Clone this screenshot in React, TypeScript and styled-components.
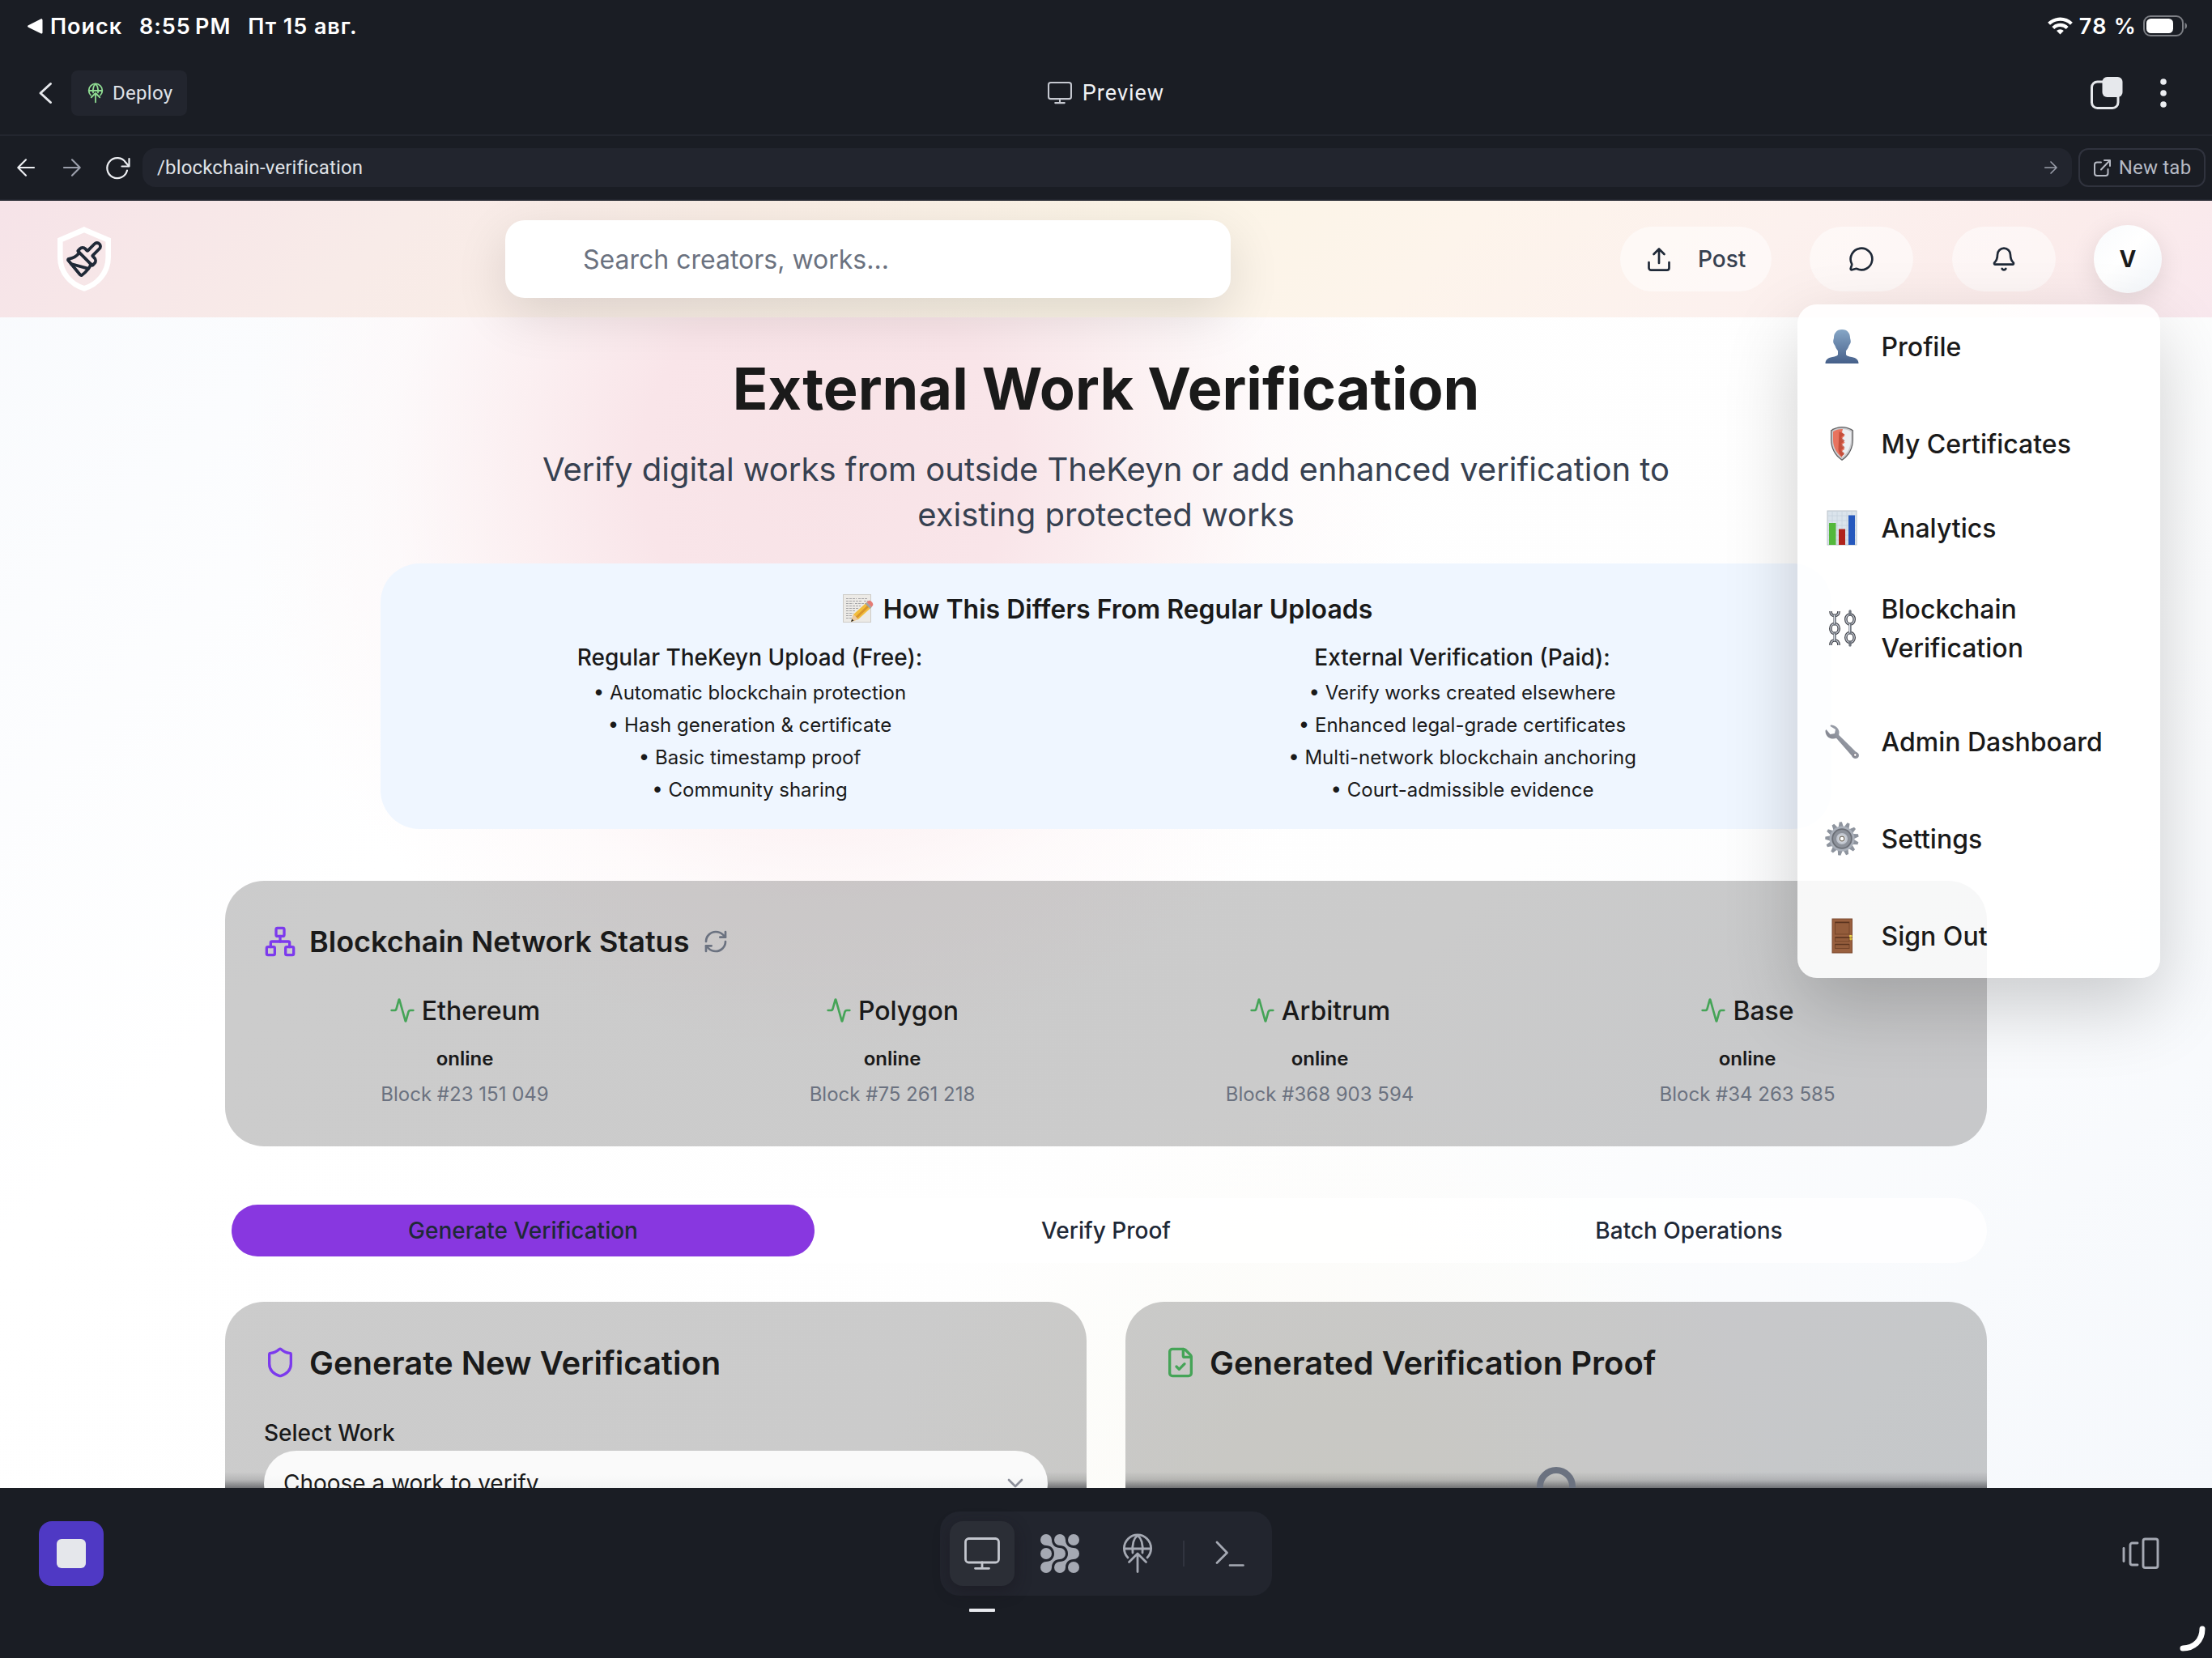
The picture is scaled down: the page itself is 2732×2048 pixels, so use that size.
import React from "react";
import styled, { createGlobalStyle, css } from "styled-components";
import {
  Activity,
  Bell,
  ChevronDown,
  FileCheck,
  Lock,
  MessageCircle,
  Network,
  Paintbrush,
  RefreshCw,
  Shield,
} from "lucide-react";

const GlobalStyle = createGlobalStyle`
  * { box-sizing: border-box; }
  html, body { margin: 0; padding: 0; background: #1a1d24; }
  body { font-family: Inter, "Noto Sans", sans-serif; color: #1a1a1a; overflow: hidden; }
  svg { display: block; flex: none; overflow: visible; }
  h1, h2, h3, p, ul { margin: 0; padding: 0; font-weight: inherit; }
  button { font: inherit; border: 0; padding: 0; margin: 0; background: none; }
`;

const ideFont = css`
  font-family: Roboto, "Noto Sans", sans-serif;
  font-weight: 400;
`;

const Device = styled.div`
  width: 2732px;
  height: 2048px;
  display: flex;
  flex-direction: column;
  background: #1a1d24;
  overflow: hidden;
`;

/* ---------- status bar ---------- */

const StatusBar = styled.header`
  height: 64px;
  padding: 0 30px 0 34px;
  display: flex;
  align-items: center;
  justify-content: space-between;
  color: #fff;
  font-size: 27px;
  font-weight: 600;
`;

const StatusGroup = styled.div<{ $gap: number }>`
  display: flex;
  align-items: center;
  gap: ${(p) => p.$gap}px;
  white-space: nowrap;
`;

const StatusText = styled.span<{ $track?: number }>`
  letter-spacing: ${(p) => p.$track ?? 0.95}px;
`;

/* ---------- app header ---------- */

const AppHeader = styled.div`
  height: 104px;
  padding: 0 56px 0 48px;
  display: grid;
  grid-template-columns: 1fr auto 1fr;
  align-items: center;
  border-bottom: 2px solid #23262f;
  ${ideFont}
`;

const HeaderSide = styled.div<{ $end?: boolean }>`
  display: flex;
  align-items: center;
  gap: ${(p) => (p.$end ? 46 : 24)}px;
  justify-content: ${(p) => (p.$end ? "flex-end" : "flex-start")};
`;

const DeployButton = styled.button`
  height: 56px;
  width: 143px;
  padding-left: 21px;
  display: flex;
  align-items: center;
  gap: 12px;
  border-radius: 8px;
  background: #22252e;
  color: #dfe1e6;
  font-size: 24px;
  letter-spacing: 0.3px;
`;

const HeaderTitle = styled.div`
  padding-left: 8px;
  display: flex;
  align-items: center;
  gap: 13px;
  font-size: 27px;
  font-weight: 400;
  letter-spacing: 1px;
  color: #f0f1f4;
`;

/* ---------- address bar ---------- */

const AddressBar = styled.div`
  height: 80px;
  padding: 0 8px 0 21px;
  display: flex;
  align-items: center;
  border-bottom: 2px solid #23262f;
  ${ideFont}
`;

const NavIcons = styled.div`
  width: 155px;
  display: flex;
  align-items: center;
  gap: 35px;
  > svg:last-child { margin-left: -4px; }
`;

const UrlField = styled.div`
  flex: 1;
  height: 48px;
  padding: 0 18px;
  display: flex;
  align-items: center;
  justify-content: space-between;
  border-radius: 16px;
  background: #22252e;
  color: #dfe1e6;
  font-size: 24px;
  letter-spacing: 0.15px;
`;

const NewTab = styled.button`
  width: 157px;
  height: 48px;
  margin-left: 8px;
  padding-left: 1px;
  display: flex;
  align-items: center;
  justify-content: center;
  gap: 10px;
  border: 2px solid #30333e;
  border-radius: 12px;
  color: #b6bac4;
  font-size: 24px;
  letter-spacing: 0.2px;
`;

/* ---------- previewed site ---------- */

const Site = styled.main`
  position: relative;
  height: 1590px;
  overflow: hidden;
  background:
    radial-gradient(circle 720px at 1020px 330px, #f8e3e7 0, #f9e5e9 230px, #fbedefdd 380px, #fdf6f788 540px, #ffffff00 720px),
    radial-gradient(circle 560px at 1640px 1660px, #fbfaf2 0, #fcfbf699 300px, #ffffff00 560px),
    linear-gradient(135deg, #f8fafd 0%, #ffffff 30%, #fefefe 62%, #f5f8fc 100%);
`;

const SiteNav = styled.nav`
  position: relative;
  z-index: 1;
  height: 144px;
  padding: 0 62px 0 71px;
  display: flex;
  align-items: center;
  background: linear-gradient(135deg, #f6e3e8 0%, #f8ebe8 18%, #f9ede5 32%, #fbf4e6 50%, #fdf4eb 64%, #fcf1ee 78%, #fbeceb 90%, #f9e8ee 100%);
`;

const Logo = styled.div`
  width: 66px;
  height: 80px;
  display: grid;
  place-items: center;
  > * { grid-area: 1 / 1; }
`;

const Search = styled.div`
  width: 896px;
  height: 96px;
  margin-left: 487px;
  padding-left: 96px;
  display: flex;
  align-items: center;
  border-radius: 24px;
  background: #fff;
  box-shadow: 0 20px 64px rgba(0, 0, 0, 0.12);
  color: #6b7280;
  font-size: 32px;
`;

const NavActions = styled.div`
  margin-left: auto;
  display: flex;
  align-items: center;
  gap: 47.3px;
`;

const Pill = styled.button<{ $w: number }>`
  width: ${(p) => p.$w}px;
  height: 80px;
  display: flex;
  align-items: center;
  justify-content: center;
  gap: 32px;
  border-radius: 40px;
  background: rgba(255, 255, 255, 0.5);
  color: #374151;
  font-size: 28px;
  font-weight: 500;
`;

const Avatar = styled.div`
  width: 84px;
  height: 84px;
  display: grid;
  place-items: center;
  border-radius: 50%;
  background: linear-gradient(135deg, #f8fafc 0%, #ffffff 45%, #f1f5f9 100%);
  box-shadow: 0 8px 32px rgba(0, 0, 0, 0.1);
  font-size: 28px;
  font-weight: 700;
`;

/* ---------- account menu ---------- */

const AccountMenu = styled.div`
  position: absolute;
  z-index: 2;
  top: 128px;
  right: 64px;
  width: 448px;
  height: 832px;
  display: flex;
  flex-direction: column;
  border-radius: 24px;
  background: rgba(255, 255, 255, 0.86);
  box-shadow: 0 36px 90px rgba(0, 0, 0, 0.19);
`;

const MenuItem = styled.div<{ $before: number }>`
  min-height: 104px;
  margin-top: ${(p) => p.$before}px;
  padding: 24px 32px 24px 34px;
  display: flex;
  align-items: center;
  gap: 27.5px;
  font-size: 32px;
  line-height: 48px;
  font-weight: 500;
`;

const MenuLabel = styled.span`
  padding-top: 1px;
  margin-bottom: -1px;
`;

/* ---------- page content ---------- */

const Hero = styled.section`
  display: flex;
  flex-direction: column;
  align-items: center;
  padding-top: 44px;
  text-align: center;
`;

const Title = styled.h1`
  font-size: 72px;
  line-height: 88px;
  font-weight: 700;
`;

const Subtitle = styled.p`
  width: 1440px;
  margin-top: 28px;
  font-size: 40px;
  line-height: 56px;
  color: #374151;
`;

const InfoBox = styled.div`
  width: 1792px;
  height: 328px;
  margin-top: 32px;
  padding: 32px 32px 0;
  border-radius: 48px;
  background: #eff6ff;
`;

const InfoHeading = styled.h3`
  display: flex;
  align-items: center;
  justify-content: center;
  gap: 12px;
  height: 48px;
  padding-left: 4px;
  font-size: 32px;
  font-weight: 600;
`;

const InfoColumns = styled.div`
  display: grid;
  grid-template-columns: 1fr 1fr;
  gap: 32px;
  margin-top: 16px;
`;

const InfoColumnTitle = styled.h3`
  font-size: 28px;
  line-height: 40px;
  margin-bottom: 4px;
  font-weight: 500;
`;

const InfoList = styled.ul`
  list-style: none;
  font-size: 24px;
  line-height: 40px;
`;

const Container = styled.div`
  width: 2176px;
  margin: 64px auto 0;
  display: flex;
  flex-direction: column;
`;

const Card = styled.section<{ $h: number }>`
  height: ${(p) => p.$h}px;
  padding: 48px;
  border-radius: 48px;
  background: rgba(0, 0, 0, 0.2);
`;

const CardHeading = styled.h2<{ $size: number }>`
  height: 54px;
  display: flex;
  align-items: center;
  gap: 16px;
  font-size: ${(p) => p.$size}px;
  font-weight: 600;
  > svg:last-child:not(:first-child) { margin-left: 1px; }
`;

const Networks = styled.div`
  display: grid;
  grid-template-columns: repeat(4, 1fr);
  gap: 32px;
  margin-top: 34px;
`;

const NetworkCell = styled.div`
  display: flex;
  flex-direction: column;
  align-items: center;
`;

const NetworkName = styled.div`
  display: flex;
  align-items: center;
  gap: 8px;
  height: 48px;
  font-size: 32px;
  font-weight: 500;
`;

const NetworkState = styled.div`
  height: 40px;
  margin-top: 16px;
  line-height: 40px;
  font-size: 24px;
  font-weight: 600;
`;

const NetworkBlock = styled.div`
  height: 40px;
  margin-top: 4px;
  line-height: 40px;
  font-size: 24px;
  color: #6b7280;
`;

const Tabs = styled.div`
  height: 80px;
  margin-top: 64px;
  padding: 8px;
  display: grid;
  grid-template-columns: repeat(3, 1fr);
  border-radius: 40px;
  background: rgba(255, 255, 255, 0.8);
`;

const Tab = styled.button<{ $active?: boolean }>`
  border-radius: 32px;
  background: ${(p) => (p.$active ? "#8837e0" : "transparent")};
  color: #1f2937;
  font-size: 28px;
  font-weight: 500;
`;

const Panels = styled.div`
  margin-top: 48px;
  display: grid;
  grid-template-columns: 1fr 1fr;
  gap: 48px;
`;

const PanelCard = styled(Card)`
  background:
    linear-gradient(to bottom, rgba(26, 29, 36, 0) 210px, rgba(26, 29, 36, 0.12) 220px, rgba(26, 29, 36, 0.5) 230px) ,
    rgba(0, 0, 0, 0.2);
`;

const FieldLabel = styled.div`
  margin-top: 40px;
  height: 40px;
  line-height: 40px;
  font-size: 28px;
  font-weight: 500;
`;

const SelectBox = styled.div`
  height: 80px;
  margin-top: 2px;
  padding: 0 24px;
  display: flex;
  align-items: center;
  justify-content: space-between;
  border-radius: 40px;
  background: linear-gradient(to bottom, #fafafa 30px, #f3f4f4 46px);
  font-size: 28px;
`;

const EmptyState = styled.div`
  display: flex;
  justify-content: center;
  margin-top: 98px;
`;

/* ---------- bottom dock ---------- */

const Dock = styled.footer`
  position: relative;
  height: 210px;
  padding: 29px 48px 0;
  display: grid;
  grid-template-columns: 1fr auto 1fr;
  align-items: start;
  background: #1a1d24;
`;

const StopButton = styled.button`
  width: 80px;
  height: 80px;
  margin-top: 12px;
  display: grid;
  place-items: center;
  border-radius: 16px;
  background: #4f39c4;
`;

const StopGlyph = styled.span`
  width: 36px;
  height: 36px;
  border-radius: 6px;
  background: #e5e7eb;
`;

const DockCenter = styled.div`
  display: flex;
  flex-direction: column;
  gap: 16px;
`;

const DockTabs = styled.div`
  width: 410px;
  height: 104px;
  padding: 12px;
  display: flex;
  align-items: center;
  gap: 16px;
  border-radius: 24px;
  background: #22252e;
`;

const DockTab = styled.button<{ $active?: boolean }>`
  flex: none;
  width: 80px;
  height: 80px;
  display: grid;
  place-items: center;
  border-radius: 16px;
  background: ${(p) => (p.$active ? "#2b2e36" : "transparent")};
  box-shadow: ${(p) => (p.$active ? "0 6px 20px rgba(24, 20, 28, 0.45)" : "none")};
`;

const DockDivider = styled.span`
  flex: none;
  width: 2px;
  height: 32px;
  background: #31343f;
`;

const ActiveMark = styled.span`
  width: 32px;
  height: 4px;
  margin-left: 36px;
  border-radius: 1px;
  background: #e8e9ee;
`;

const DockRight = styled.div`
  display: flex;
  justify-content: flex-end;
  margin: 32px 16px 0 0;
`;

const CornerMark = styled.div`
  position: absolute;
  right: 8px;
  bottom: 8px;
`;

/* ---------- drawn icons ---------- */

const Wifi = () => (
  <svg width="31" height="22" viewBox="0 0 31 22" fill="none" stroke="#fff" strokeWidth="4.2">
    <path d="M1.6 8.3a20 20 0 0 1 27.8 0" />
    <path d="M6.8 13.4a12.6 12.6 0 0 1 17.4 0" />
    <path d="M15.5 21.6l-4.4-4.6a6.3 6.3 0 0 1 8.8 0z" fill="#fff" stroke="none" />
  </svg>
);

const Battery = () => (
  <svg width="55" height="26" viewBox="0 0 55 26">
    <rect x="1" y="1" width="48" height="24" rx="8" fill="none" stroke="#7d7f85" strokeWidth="2" />
    <rect x="4" y="4" width="33" height="18" rx="5.5" fill="#fff" />
    <path d="M51.5 9c3.4 1.300 3.400 6.700 0 8z" fill="#7d7f85" />
  </svg>
);

const GlobeUp = ({ w, color, sw }: { w: number; color: string; sw: number }) => (
  <svg width={w} height={(w * 4) / 3} viewBox="0 0 36 48" fill="none" stroke={color} strokeWidth={sw} strokeLinecap="round" strokeLinejoin="round">
    <path d="M6 29A16.600 16.600 0 1 1 30 29" />
    <path d="M1.500 18h33" />
    <path d="M18 1.500c-4.500 3.500-7 11-6 21.500M18 1.500c4.500 3.500 7 11 6 21.500" />
    <path d="M18 25v21.500M7.500 34.500L18 24l10.500 10.500" />
  </svg>
);

const Monitor = ({ w, color, sw }: { w: number; color: string; sw: number }) => (
  <svg width={w} height={(w * 40) / 44} viewBox="0 0 44 40" fill="none" stroke={color} strokeWidth={sw} strokeLinecap="round">
    <rect x="1.500" y="1.500" width="41" height="29.500" rx="4" />
    <path d="M22 31v7M13.500 38.300h17" />
  </svg>
);

const Arrow = ({ size, color, flip }: { size: number; color: string; flip?: boolean }) => (
  <svg width={size} height={size} viewBox="0 0 22 22" fill="none" stroke={color} strokeWidth="2.200" strokeLinecap="round" strokeLinejoin="round">
    <path d={flip ? "M21 11H1.500M11 1.300L1.300 11l9.700 9.700" : "M1 11h19.500M11 1.300l9.700 9.700-9.700 9.700"} />
  </svg>
);

const Reload = () => (
  <svg width="30" height="27" viewBox="0 0 30 27" fill="none" stroke="#eceef2" strokeWidth="2.200" strokeLinecap="round" strokeLinejoin="round">
    <path d="M26 16.500A12.500 12.500 0 1 1 24.300 6.800L28 11" />
    <path d="M28.500 2v9.500H19.500" />
  </svg>
);

const OpenOut = () => (
  <svg width="21" height="21" viewBox="0 0 21 21" fill="none" stroke="#b6bac4" strokeWidth="2" strokeLinecap="round" strokeLinejoin="round">
    <path d="M9 3.500H4A3 3 0 0 0 1 6.500V17a3 3 0 0 0 3 3h10.500a3 3 0 0 0 3-3v-5" />
    <path d="M13 1h7v7M19.500 1.500L9 12.500" />
  </svg>
);

const Panes = () => (
  <svg width="40" height="40" viewBox="0 0 40 40">
    <rect x="1.500" y="6" width="32.500" height="32.500" rx="7" fill="none" stroke="#e6e8ec" strokeWidth="3" />
    <rect x="14.500" y="0" width="25" height="25" rx="6" fill="#e6e8ec" />
  </svg>
);

const Dots = () => (
  <svg width="8" height="38" viewBox="0 0 8 38" fill="#eceef2">
    <circle cx="4" cy="5" r="3.800" />
    <circle cx="4" cy="19" r="3.800" />
    <circle cx="4" cy="33" r="3.800" />
  </svg>
);

const Upload = () => (
  <svg width="32" height="32" viewBox="0 0 32 32" fill="none" stroke="#1f2937" strokeWidth="2.700" strokeLinecap="round" strokeLinejoin="round">
    <path d="M3.500 20v7a2.700 2.700 0 0 0 2.700 2.700h19.600a2.700 2.700 0 0 0 2.700-2.700v-7M16 21V3.500M9.500 10L16 3.500l6.500 6.500" />
  </svg>
);

const Blobs = () => (
  <svg width="48" height="48" viewBox="0 0 48 48" fill="#a5a9b3">
    {[7, 24, 41].map((x) => [7, 24, 41].map((y) => <circle key={`${x}-${y}`} cx={x} cy={y} r="7" />))}
    {[0, 17].map((dx) => (
      <g key={dx} transform={`translate(${dx} 0)`}>
        <path d="M14 7C14 13 18 17 24 17V24H17C17 18 13 14 7 14V7Z" />
        <path d="M17 24C17 30 13 34 7 34V41H14C14 35 18 31 24 31V24Z" />
      </g>
    ))}
  </svg>
);

const Terminal = () => (
  <svg width="36" height="32" viewBox="0 0 36 32" fill="none" stroke="#a5a9b3" strokeWidth="2.700" strokeLinecap="round" strokeLinejoin="round">
    <path d="M2 2l12.500 13L2 27.500M18 30.500h16.500" />
  </svg>
);

const Carousel = () => (
  <svg width="47" height="40" viewBox="0 0 47 40" fill="none" stroke="#a5a9b3" strokeWidth="2.900" strokeLinecap="round">
    <rect x="26" y="2" width="18" height="35.500" rx="2.500" />
    <path d="M19 7H12.500a2.500 2.500 0 0 0-2.500 2.500v22a2.500 2.500 0 0 0 2.500 2.500H19" />
    <path d="M2 13.500v16" />
  </svg>
);

const ShieldOutline = () => (
  <svg width="66" height="80" viewBox="0 0 66 80" fill="none" stroke="#fff" strokeWidth="6.600">
    <path d="M33 3.700L62.700 16.500V38C62.700 57 49 71.500 33 76.300C17 71.500 3.300 57 3.300 38V16.500Z" />
  </svg>
);

/* ---------- pictograms of the menu ---------- */

const Emoji: React.FC<{ size?: number; children: React.ReactNode }> = ({ size = 42, children }) => (
  <svg width={size} height={size} viewBox="0 0 42 42">{children}</svg>
);

const PersonEmoji = () => (
  <Emoji>
    <defs>
      <linearGradient id="person" x1="0" y1="0" x2="0" y2="1">
        <stop offset="0" stopColor="#86a6c6" />
        <stop offset="1" stopColor="#46608a" />
      </linearGradient>
    </defs>
    <path fill="url(#person)" d="M21 0C28 0 31 5 31 10c0 1.500 .8 2 .8 5 0 2.500-1.800 3.500-2.400 5.500C28.500 23.500 27 25 26 26.500v4c0 2 3 2.800 7 3.500 5.500 1 8.500 3.500 8.500 8H.5c0-4.500 3-7 8.500-8 4-.7 7-1.500 7-3.500v-4c-1-1.500-2.500-3-3.400-6C12 18.500 10.200 17.500 10.200 15c0-3 .8-3.500 .8-5C11 5 14 0 21 0z" />
  </Emoji>
);

const ShieldEmoji = () => (
  <Emoji>
    <path fill="#5d5d5f" d="M21 0c5 0 10 1.500 14 4.500v11C35 27 30 36 21 42 12 36 7 27 7 15.500v-11C11 1.500 16 0 21 0z" />
    <path fill="#c9c9cc" d="M21 1.200c4.500 0 9 1.300 12.800 4v10.500C33.800 26 29 35 21 40.500 13 35 8.200 26 8.200 15.700V5.200C12 2.500 16.500 1.200 21 1.200z" />
    <path fill="#eceef1" d="M21 3c4 0 7.500 1 11 3.200v10C32 25 28 32.500 21 38z" />
    <path fill="#e8735f" d="M21 3C17 3 13.500 4 10 6.200v10C10 25 14 32.500 21 38l0-2 3-2-4-3 4.500-3.500-4.500-4 4.500-4-4.500-4 4.500-4.500-3.500-4L22 3z" />
    <path fill="#b9422f" d="M17.500 6l7 3.500-4.500 3.500 4.500 4.500-4.500 3.500 4.500 4.500-4.500 3.500 4 4-3 4c-3-2-4-6-4.500-9z" opacity=".75" />
  </Emoji>
);

const ChartEmoji = () => (
  <Emoji>
    <rect x="3" width="36" height="42" fill="#dbe4ec" stroke="#b9c2ca" strokeWidth="1" />
    <path d="M9 1v40M15 1v40M21 1v40M27 1v40M33 1v40M4 6h34M4 12h34M4 18h34M4 24h34M4 30h34M4 36h34" stroke="#c6d2dd" strokeWidth=".8" />
    <rect x="5" y="15" width="8.500" height="27" fill="#53b83b" />
    <rect x="17" y="22.500" width="8" height="19.500" fill="#b0231b" />
    <rect x="29" y="5.500" width="8" height="36.500" fill="#2558bd" />
  </Emoji>
);

const ChainShapes = () => (
  <>
    <path d="M7 0c0 3.500 1.500 5.500 5 5.500s5-2 5-5.500" />
    <ellipse cx="12" cy="21.500" rx="5.200" ry="6" />
    <path d="M7 42c0-4 1.500-6 5-6s5 2 5 6" />
    <ellipse cx="31" cy="10" rx="5.200" ry="6" />
    <ellipse cx="31" cy="32.500" rx="5.200" ry="6" />
  </>
);

const ChainsEmoji = () => (
  <Emoji>
    <g fill="none" stroke="#3f4147" strokeWidth="3.600">
      <ChainShapes />
    </g>
    <g fill="none" stroke="#c2c7d1" strokeWidth="1.300">
      <ChainShapes />
    </g>
    <path d="M12 5v11M12 27v9M31 0v4M31 16v11M31 38v4" stroke="#70767f" strokeWidth="3.400" strokeLinecap="round" />
    <path d="M11.500 5v10M11.500 28v8M30.500 16v10" stroke="#dfe4ec" strokeWidth="1.100" strokeLinecap="round" />
  </Emoji>
);

const WrenchEmoji = () => (
  <Emoji>
    <defs>
      <linearGradient id="wrench" x1="0" y1="1" x2="1" y2="0">
        <stop offset="0" stopColor="#6b6a74" />
        <stop offset=".5" stopColor="#8f939d" />
        <stop offset="1" stopColor="#b4bbc6" />
      </linearGradient>
    </defs>
    <path fill="url(#wrench)" d="M7 .5C12 .2 17 4 17.500 9c.1 1.500-.3 3-.3 4L38 33.500c2 .5 4 2.500 4 4.500 0 2.500-2 4-4.500 4-2 0-3.800-1.300-4.500-3.500L14 16.800c-1.500 .5-3 .9-5 .7C4 17 .3 12.500.5 7.500L1.500 6l5 6 5.500-1L13 6 6.500 2z" />
    <circle cx="37.300" cy="37.500" r="1.900" fill="#fff" stroke="#77727c" strokeWidth="1" />
  </Emoji>
);

const GearEmoji = () => (
  <Emoji>
    <g fill="#8e949e">
      {Array.from({ length: 13 }, (_, i) => (
        <path key={i} d="M17.800 7L19.500 .3h3.200L24.200 7z" transform={`rotate(${(i * 360) / 13 - 5} 21 21)`} />
      ))}
    </g>
    <circle cx="21" cy="21" r="15.500" fill="#a9afb9" />
    <circle cx="21" cy="21" r="11.800" fill="#8c919a" stroke="#6b6f77" strokeWidth="1.800" />
    <circle cx="21" cy="21" r="7" fill="#c1c6cf" />
    <circle cx="21" cy="21" r="4.800" fill="#d3d8e0" />
    <circle cx="21" cy="21" r="2.800" fill="#fff" stroke="#7b7468" strokeWidth="1.200" />
  </Emoji>
);

const DoorEmoji = () => (
  <Emoji>
    <rect x="9" width="24.500" height="42" fill="#99603f" />
    <rect x="9" width="24.500" height="42" fill="none" stroke="#7c4a30" strokeWidth="1" />
    <g fill="#935c3b" stroke="#744429" strokeWidth="1">
      <rect x="12.500" y="4" width="17.500" height="15" />
      <rect x="12.500" y="23" width="17.500" height="5" />
      <rect x="12.500" y="31.500" width="17.500" height="5" />
    </g>
    <path d="M12.500 4.500h17.500M12.500 23h17.500M12.500 31.500h17.500" stroke="#5c3520" strokeWidth="1.400" />
    <rect x="30" y="20" width="3.500" height="2.600" rx="1" fill="#eed94e" />
    <rect x="30.500" y="23.300" width="3" height="3" rx="1" fill="#d9bd3a" />
  </Emoji>
);

const MemoEmoji = () => (
  <svg width="38" height="40" viewBox="0 0 38 40">
    <rect x=".5" y="2.500" width="34" height="34" fill="#eceae6" stroke="#cfcdc8" strokeWidth="1" />
    <path d="M4 7.500h13M19 7.500h12M4 10.500h20M26 10.500h5M4 13.500h9M15 13.500h13M4 16.500h18M4 19.500h15M4 22.500h11M4 25.500h9M4 28.500h8M4 31.500h7" stroke="#9c9c9e" strokeWidth=".9" strokeDasharray="3 1" />
    <path d="M10 36l3-9L29.500 12l6 6L19 33z" fill="#f2bd3d" />
    <path d="M15 30.500L31.500 14.500l2 2L17.500 32z" fill="#d9952a" />
    <path d="M10 36l3-9 3.200 2.800L19 33z" fill="#ecc9a0" />
    <path d="M10 36l1.300-3.500 2.200 2.200z" fill="#2d2d2d" />
    <path d="M29.500 12l2.200-2c2-1.500 6.500 3 5.500 5.500l-1.700 2.500z" fill="#e57b75" />
    <path d="M27.500 13.800l2-1.800 6 6-2 1.800z" fill="#9fa4a8" />
  </svg>
);

/* ---------- data ---------- */

const menu = [
  { icon: <PersonEmoji />, label: "Profile", before: 0 },
  { icon: <ShieldEmoji />, label: "My Certificates", before: 16 },
  { icon: <ChartEmoji />, label: "Analytics", before: 0 },
  { icon: <ChainsEmoji />, label: "Blockchain Verification", before: 0 },
  { icon: <WrenchEmoji />, label: "Admin Dashboard", before: 16 },
  { icon: <GearEmoji />, label: "Settings", before: 16 },
  { icon: <DoorEmoji />, label: "Sign Out", before: 16 },
];

const uploads = [
  {
    title: "Regular TheKeyn Upload (Free):",
    points: ["Automatic blockchain protection", "Hash generation & certificate", "Basic timestamp proof", "Community sharing"],
  },
  {
    title: "External Verification (Paid):",
    points: ["Verify works created elsewhere", "Enhanced legal-grade certificates", "Multi-network blockchain anchoring", "Court-admissible evidence"],
  },
];

const networks = [
  { name: "Ethereum", block: "23 151 049" },
  { name: "Polygon", block: "75 261 218" },
  { name: "Arbitrum", block: "368 903 594" },
  { name: "Base", block: "34 263 585" },
];

export default function App() {
  return (
    <Device>
      <GlobalStyle />
      <StatusBar>
        <StatusGroup $gap={21}>
          <StatusGroup $gap={9}>
            <svg width="19" height="19" viewBox="0 0 19 19" fill="#fff">
              <path d="M18.500 2v15c0 1.500-1 2-2.200 1.300L1 10.700c-1.300-.8-1.300-1.800 0-2.500L16.300 .6C17.500 0 18.500 .5 18.500 2z" />
            </svg>
            <StatusText>Поиск</StatusText>
          </StatusGroup>
          <StatusText>8:55{"\u2009"}PM</StatusText>
          <StatusText>Пт 15 авг.</StatusText>
        </StatusGroup>
        <StatusGroup $gap={8}>
          <Wifi />
          <StatusText $track={1.2}>78 %</StatusText>
          <Battery />
        </StatusGroup>
      </StatusBar>

      <AppHeader>
        <HeaderSide>
          <svg width="16" height="26" viewBox="0 0 16 26" fill="none" stroke="#e6e8ec" strokeWidth="3" strokeLinecap="round" strokeLinejoin="round">
            <path d="M14.500 1.500L2 13l12.500 11.500" />
          </svg>
          <DeployButton>
            <GlobeUp w={18} color="#8fdc92" sw={3.6} />
            Deploy
          </DeployButton>
        </HeaderSide>
        <HeaderTitle>
          <Monitor w={30} color="#c5c8d0" sw={3} />
          Preview
        </HeaderTitle>
        <HeaderSide $end>
          <Panes />
          <Dots />
        </HeaderSide>
      </AppHeader>

      <AddressBar>
        <NavIcons>
          <Arrow size={22} color="#eceef2" flip />
          <Arrow size={22} color="#9a9eaa" />
          <Reload />
        </NavIcons>
        <UrlField>
          /blockchain-verification
          <Arrow size={16} color="#9a9eaa" />
        </UrlField>
        <NewTab>
          <OpenOut />
          New tab
        </NewTab>
      </AddressBar>

      <Site>
        <SiteNav>
          <Logo>
            <ShieldOutline />
            <Paintbrush size={48} color="#1f2937" strokeWidth={1.9} />
          </Logo>
          <Search>Search creators, works...</Search>
          <NavActions>
            <Pill $w={187}>
              <Upload />
              Post
            </Pill>
            <Pill $w={128}>
              <MessageCircle size={32} color="#1f2937" strokeWidth={2} />
            </Pill>
            <Pill $w={128}>
              <Bell size={32} color="#1f2937" strokeWidth={2} />
            </Pill>
            <Avatar>V</Avatar>
          </NavActions>
        </SiteNav>

        <AccountMenu>
          {menu.map((m) => (
            <MenuItem key={m.label} $before={m.before}>
              {m.icon}
              <MenuLabel>{m.label}</MenuLabel>
            </MenuItem>
          ))}
        </AccountMenu>

        <Hero>
          <Title>External Work Verification</Title>
          <Subtitle>Verify digital works from outside TheKeyn or add enhanced verification to existing protected works</Subtitle>
          <InfoBox>
            <InfoHeading>
              <MemoEmoji />
              How This Differs From Regular Uploads
            </InfoHeading>
            <InfoColumns>
              {uploads.map((u) => (
                <div key={u.title}>
                  <InfoColumnTitle>{u.title}</InfoColumnTitle>
                  <InfoList>
                    {u.points.map((p) => (
                      <li key={p}>• {p}</li>
                    ))}
                  </InfoList>
                </div>
              ))}
            </InfoColumns>
          </InfoBox>
        </Hero>

        <Container>
          <Card $h={328}>
            <CardHeading $size={36}>
              <Network size={40} color="#7c3aed" />
              Blockchain Network Status
              <RefreshCw size={32} color="#6b7280" strokeWidth={2} />
            </CardHeading>
            <Networks>
              {networks.map((n) => (
                <NetworkCell key={n.name}>
                  <NetworkName>
                    <Activity size={32} color="#45a457" />
                    {n.name}
                  </NetworkName>
                  <NetworkState>online</NetworkState>
                  <NetworkBlock>Block #{n.block}</NetworkBlock>
                </NetworkCell>
              ))}
            </Networks>
          </Card>

          <Tabs>
            <Tab $active>Generate Verification</Tab>
            <Tab>Verify Proof</Tab>
            <Tab>Batch Operations</Tab>
          </Tabs>

          <Panels>
            <PanelCard $h={600}>
              <CardHeading $size={40}>
                <Shield size={40} color="#7c3aed" />
                Generate New Verification
              </CardHeading>
              <FieldLabel>Select Work</FieldLabel>
              <SelectBox>
                Choose a work to verify
                <ChevronDown size={32} color="#8b8e99" />
              </SelectBox>
            </PanelCard>
            <PanelCard $h={600}>
              <CardHeading $size={40}>
                <FileCheck size={40} color="#45a457" />
                Generated Verification Proof
              </CardHeading>
              <EmptyState>
                <Lock size={96} color="#6b7280" />
              </EmptyState>
            </PanelCard>
          </Panels>
        </Container>
      </Site>

      <Dock>
        <StopButton>
          <StopGlyph />
        </StopButton>
        <DockCenter>
          <DockTabs>
            <DockTab $active>
              <Monitor w={44} color="#c3c6ce" sw={2.8} />
            </DockTab>
            <DockTab>
              <Blobs />
            </DockTab>
            <DockTab>
              <GlobeUp w={36} color="#a5a9b3" sw={2.8} />
            </DockTab>
            <DockDivider />
            <DockTab>
              <Terminal />
            </DockTab>
          </DockTabs>
          <ActiveMark />
        </DockCenter>
        <DockRight>
          <Carousel />
        </DockRight>
        <CornerMark>
          <svg width="32" height="32" viewBox="0 0 32 32" fill="none" stroke="#fff" strokeWidth="7" strokeLinecap="round">
            <path d="M28 4C28 18 18 28 4 28" />
          </svg>
        </CornerMark>
      </Dock>
    </Device>
  );
}
